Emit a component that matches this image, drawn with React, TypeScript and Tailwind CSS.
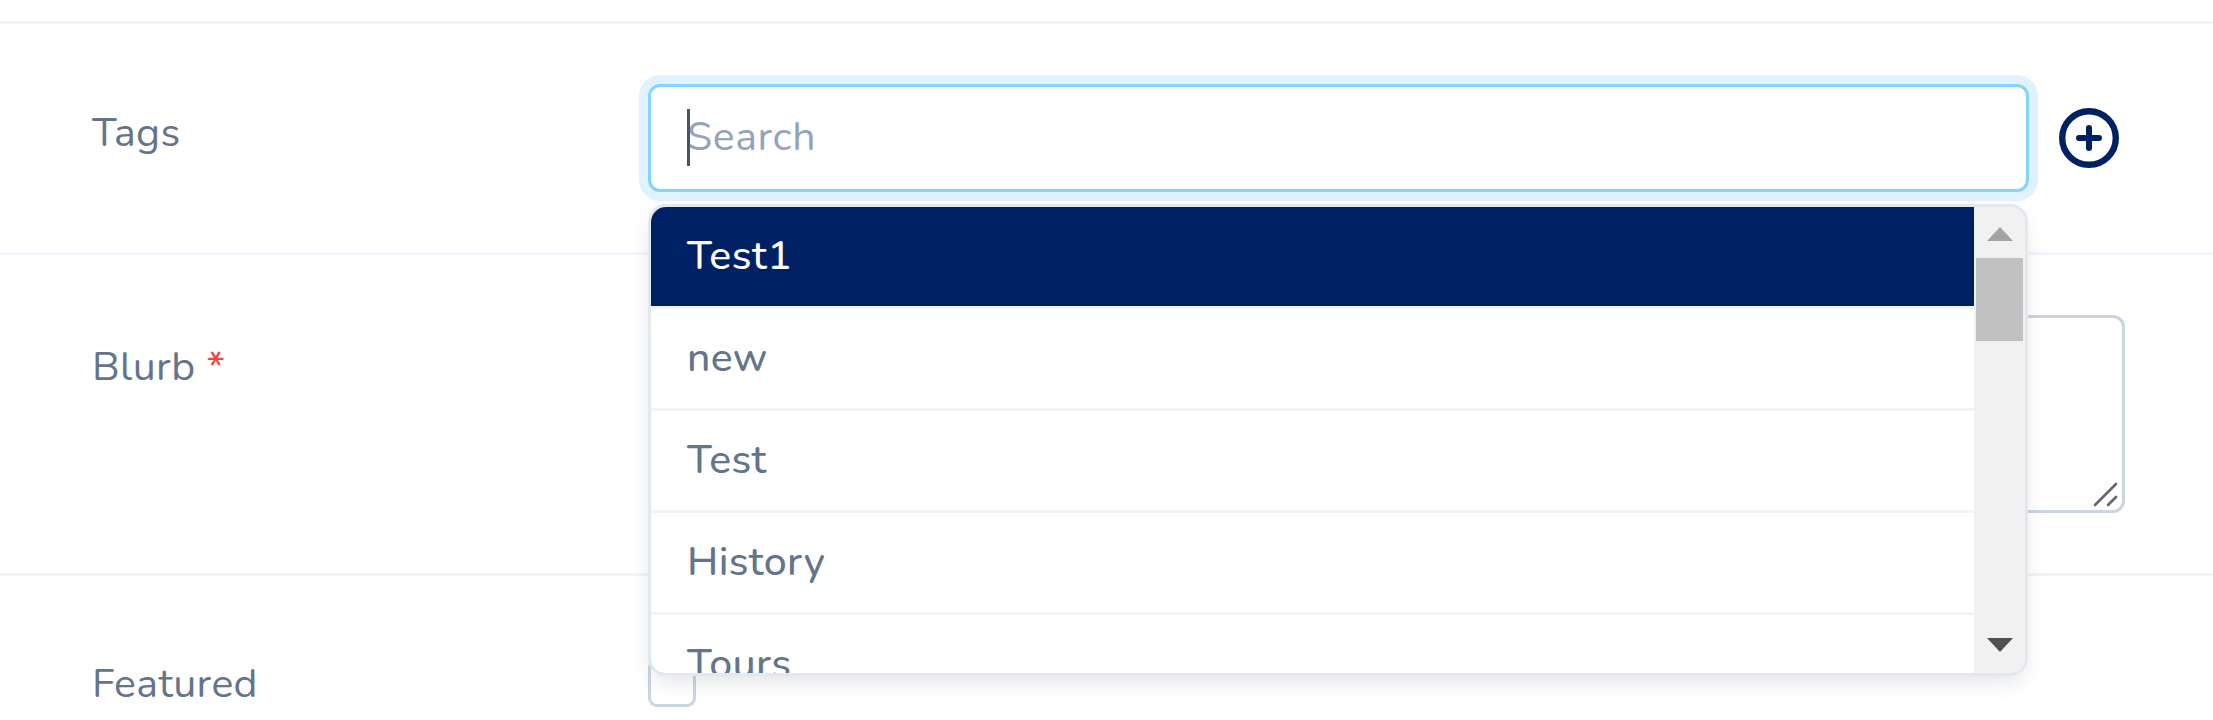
const options = ['Test1', 'new', 'Test', 'History', 'Tours']

function PlusIcon() {
  return (
    <svg width="60" height="60" viewBox="0 0 60 60" fill="none" stroke="#002064" className="shrink-0">
      <circle cx="30" cy="30" r="26.8" strokeWidth="6.4" />
      <path d="M30 20v20M20 30h20" strokeWidth="6" strokeLinecap="round" />
    </svg>
  )
}

function FakeScrollbar() {
  return (
    <div className="w-[51px] shrink-0 bg-[#f1f1f1] flex flex-col items-center">
      <svg width="26" height="14" viewBox="0 0 26 14" className="mt-[20px] shrink-0">
        <path d="M13 0L26 14H0z" fill="#a3a3a3" />
      </svg>
      <div className="w-[47px] h-[83px] mt-[17px] bg-[#c1c1c1]" />
      <svg width="26" height="14" viewBox="0 0 26 14" className="mt-auto mb-[21px] shrink-0">
        <path d="M0 0H26L13 14z" fill="#505050" />
      </svg>
    </div>
  )
}

function TagsDropdown() {
  return (
    <div className="absolute left-0 top-[120px] w-[1380px] h-[472px] flex overflow-hidden bg-white border-[3px] border-[#e2e8f0] rounded-[18px] shadow-[0_9px_22px_-4px_rgba(15,23,42,0.12)] z-10">
      <ul className="flex-1 min-w-0 overflow-hidden">
        {options.map((o, i) => (
          <li
            key={o}
            className={
              i === 0
                ? 'h-[102px] pl-[36px] pb-[2px] flex items-center text-[41px] font-medium tracking-[0.6px] bg-[#002064] text-white border-b-[3px] border-[#f1f5f9]'
                : 'h-[102px] pl-[36px] pb-[2px] flex items-center text-[41px] font-medium tracking-[0.4px] text-[#64748b] border-b-[3px] border-[#f1f5f9]'
            }
          >
            {o}
          </li>
        ))}
      </ul>
      <FakeScrollbar />
    </div>
  )
}

export default function App() {
  return (
    <div className="h-[720px] overflow-hidden bg-white pt-[21px] text-[#64748b] font-['Nunito','Lato',sans-serif]">
      <div className="border-t-[3px] border-[#f1f5f9] h-[231px] flex pl-[92px] pt-[60px]">
        <label className="w-[556px] shrink-0 text-[41px] tracking-[0.4px] leading-[54px] mt-[22px] h-fit">Tags</label>
        <div className="relative w-[1381px] h-[108px]">
          <input
            placeholder="Search"
            className="w-full h-full pl-[36px] pb-[3px] text-[41px] tracking-[0.6px] bg-white border-[3px] border-[#85d3ff] rounded-[12px] ring-[9px] ring-[#e0f2fe] outline-none placeholder:text-[#94a3b8]"
          />
          <span className="absolute left-[39px] top-[25px] w-[3px] h-[57px] bg-[#475569]" />
          <TagsDropdown />
        </div>
        <div className="ml-[30px] mt-[24px]">
          <PlusIcon />
        </div>
      </div>

      <div className="border-t-[3px] border-[#f1f5f9] h-[321px] flex pl-[92px] pt-[60px]">
        <label className="w-[556px] shrink-0 text-[41px] tracking-[0.4px] leading-[54px] h-fit mt-[25px]">
          Blurb <span className="text-[#ef4444]">*</span>
        </label>
        <div className="relative w-[1477px] h-[198px]">
          <textarea className="w-full h-full resize-none bg-white border-[3px] border-[#cbd5e1] rounded-[12px] outline-none" />
          <svg width="26" height="26" viewBox="0 0 26 26" fill="none" stroke="#666" strokeWidth="2.6" strokeLinecap="round" className="absolute right-[6px] bottom-[6px]">
            <path d="M2 24L23 3M15 24l8-8" />
          </svg>
        </div>
      </div>

      <div className="border-t-[3px] border-[#f1f5f9] flex pl-[92px] pt-[83px]">
        <label className="w-[556px] shrink-0 text-[41px] tracking-[0.4px] leading-[54px] h-fit -mt-[2px]">Featured</label>
        <span className="w-[48px] h-[48px] bg-white border-[3px] border-[#cbd5e1] rounded-[9px]" />
      </div>
    </div>
  )
}
